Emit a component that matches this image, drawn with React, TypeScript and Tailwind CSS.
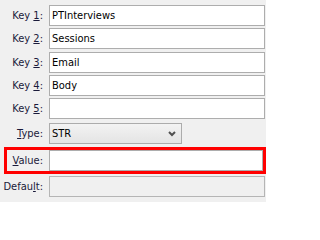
import React from "react";

const font = "font-['DejaVu_Sans_Condensed','DejaVu_Sans',sans-serif]";

function Row({
  label,
  value,
  className = "",
}: {
  label: React.ReactNode;
  value?: string;
  className?: string;
}) {
  return (
    <div className={`flex h-[21px] items-center ${className}`}>
      <div className="w-[43px] shrink-0 text-right text-[#1a1a3a] whitespace-nowrap">{label}</div>
      <div className="ml-[6px] mr-[1px] flex h-full flex-1 items-center border border-[#adadad] bg-white px-[2px] text-black">
        {value}
      </div>
    </div>
  );
}

export default function App() {
  return (
    <div className={`h-[202px] w-[266px] overflow-hidden bg-[#f0f0f0] pt-[5px] text-[11px] leading-none ${font}`}>
      <Row label={<>Key <span className="underline">1</span>:</>} value="PTInterviews" />
      <Row className="mt-[2px]" label={<>Key <span className="underline">2</span>:</>} value="Sessions" />
      <Row className="mt-[3px]" label={<>Key <span className="underline">3</span>:</>} value="Email" />
      <Row className="mt-[2px]" label={<>Key <span className="underline">4</span>:</>} value="Body" />
      <Row className="mt-[2px]" label={<>Key <span className="underline">5</span>:</>} value="" />

      <div className="mt-[4px] flex h-[21px] items-center">
        <div className="w-[43px] shrink-0 text-right text-[#1a1a3a]">
          <span className="underline">T</span>ype:
        </div>
        <div className="ml-[6px] flex h-full w-[133px] items-center justify-between border border-[#acacac] bg-gradient-to-b from-[#f3f3f3] to-[#e4e4e4] pl-[2px] pr-[5px] text-black">
          <span>STR</span>
          <svg width="8" height="6" viewBox="0 0 8 6">
            <path d="M1 1 L4 4 L7 1" fill="none" stroke="#505050" strokeWidth="2" />
          </svg>
        </div>
      </div>

      <div className="ml-[4px] mt-[3px] flex h-[27px] items-center border-[3px] border-[#ff0000]">
        <div className="w-[36px] shrink-0 text-right text-[#1a1a3a]">
          <span className="underline">V</span>alue:
        </div>
        <div className="ml-[6px] flex h-full flex-1 items-center border border-[#adadad] bg-white px-[2px]" />
      </div>

      <div className="mt-[2px] flex h-[21px] items-center">
        <div className="w-[43px] shrink-0 text-right text-[#1a1a3a]">
          Defau<span className="underline">l</span>t:
        </div>
        <div className="ml-[6px] mr-[1px] h-full flex-1 border border-[#b5b5b5] bg-[#f0f0f0]" />
      </div>
    </div>
  );
}
